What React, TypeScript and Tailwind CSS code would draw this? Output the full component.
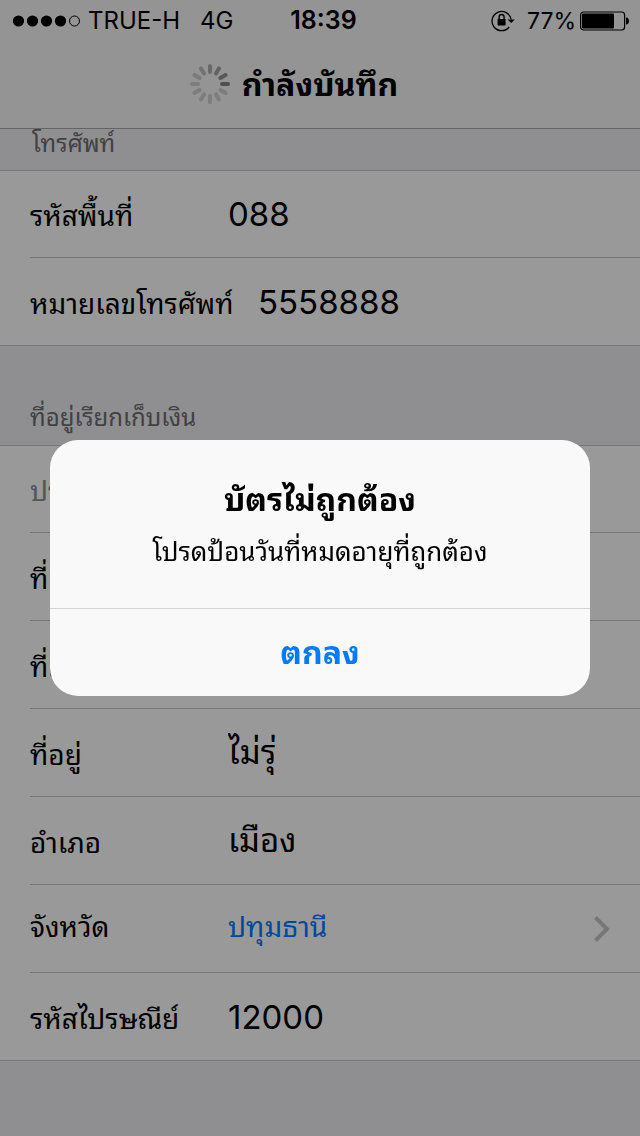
import React, { useState } from 'react';

const Spinner: React.FC = () => {
  const shades = [0.55, 0.65, 0.8, 0.9, 0.3, 0.3, 0.3, 0.3, 0.3, 0.3, 0.35, 0.45];
  return (
    <svg viewBox="0 0 40 40" className="h-10 w-10" aria-hidden="true">
      {shades.map((o, i) => (
        <rect key={i} x="18" y="0" width="4" height="10" rx="2" fill="#777" opacity={o} transform={`rotate(${i * 30} 20 20)`} />
      ))}
    </svg>
  );
};

const StatusBar: React.FC = () => (
  <div className="grid h-10 grid-cols-[1fr_auto_1fr] items-center pt-0.5 pr-[11px] pl-3 text-2xl">
    <div className="flex items-center whitespace-nowrap">
      <svg viewBox="0 0 70 12" className="mr-1.5 h-3 w-[70px]" aria-hidden="true">
        {[6, 20, 34, 48].map(x => <circle key={x} cx={x + 0.5} cy="6" r="5.6" />)}
        <circle cx="62.5" cy="6" r="5" fill="none" stroke="#000" />
      </svg>
      <span>TRUE-H</span>
      <span className="ml-5">4G</span>
    </div>
    <span className="pl-1.5 text-[25px] font-semibold">18:39</span>
    <div className="flex items-center justify-end">
      <svg viewBox="0 0 24 22" className="mr-3 h-[22px] w-6" aria-hidden="true">
        <path d="M18.2 17A9.6 9.6 0 1 1 20.1 9.5" fill="none" stroke="#000" strokeWidth="1.3" />
        <path d="M16.6 9.5h7.2l-3.6 3.6z" />
        <rect x="6.6" y="9" width="8" height="6.4" rx="0.6" />
        <path d="M8.1 9.5V7a2.5 2.5 0 0 1 5 0v2.5" fill="none" stroke="#000" strokeWidth="1.4" />
      </svg>
      <span className="text-[23px]">77%</span>
      <svg viewBox="0 0 49 20" className="ml-1 h-5 w-[49px]" aria-hidden="true">
        <rect x="0.6" y="1" width="44" height="18" rx="3" fill="none" stroke="#000" strokeWidth="1.2" />
        <rect x="2" y="2.5" width="32" height="15" rx="1" />
        <path d="M46 6.5c4 0 4 7 0 7z" />
      </svg>
    </div>
  </div>
);

type RowProps = {
  id: string;
  label: string;
  value: string;
  wide?: boolean;
  numeric?: boolean;
};

const rowClass = 'flex h-[88px] items-center border-b border-[#c8c7cc] first:h-[87px] last:h-[87px] last:border-b-0';
const inputClass = 'h-16 min-w-0 flex-1 bg-transparent text-[33px] outline-none';

const Row: React.FC<RowProps> = ({ id, label, value, wide, numeric }) => {
  const [text, setText] = useState(value);
  return (
    <div className={rowClass}>
      <label htmlFor={id} className={wide ? 'w-[228px] shrink-0 pt-1 whitespace-nowrap' : 'w-[198px] shrink-0 pt-1 whitespace-nowrap'}>{label}</label>
      <input
        id={id}
        value={text}
        inputMode={numeric ? 'numeric' : 'text'}
        onChange={e => setText(e.target.value)}
        className={numeric ? inputClass : `${inputClass} pb-1.5`}
      />
    </div>
  );
};

const Alert: React.FC<{ onClose: () => void }> = ({ onClose }) => (
  <div className="fixed inset-0 flex items-center justify-center bg-black/40 px-[50px]">
    <div role="alertdialog" aria-labelledby="alert-title" aria-describedby="alert-text" className="w-full max-w-[540px] overflow-hidden rounded-[28px] bg-[#f9f9f9] text-center">
      <div className="flex h-[168px] flex-col items-center pt-9">
        <h2 id="alert-title" className="text-[32px] leading-[48px] font-bold">บัตรไม่ถูกต้อง</h2>
        <p id="alert-text" className="mt-2 text-[26px] leading-10">โปรดป้อนวันที่หมดอายุที่ถูกต้อง</p>
      </div>
      <button onClick={onClose} className="h-[88px] w-full border-t border-[#d3d3d8] text-[32px] font-bold text-[#007aff]">ตกลง</button>
    </div>
  </div>
);

const App: React.FC = () => {
  const [open, setOpen] = useState(true);

  return (
    <div className="min-h-screen bg-[#efeff4] font-['Inter','Noto_Sans_Thai_Looped','Loma','Garuda','Waree','Noto_Sans_Thai','Noto_Sans',sans-serif] text-[28px] text-black">
      <header className="border-b border-[#a7a7aa] bg-[#f7f7f7]">
        <StatusBar />
        <div className="flex h-[88px] items-center justify-center gap-3 pr-14 pl-1">
          <Spinner />
          <h1 className="pt-0.5 text-[32px] font-bold">กำลังบันทึก</h1>
        </div>
      </header>

      <h2 className="h-[41px] pl-8 text-2xl leading-[30px] text-[#6d6d72]">โทรศัพท์</h2>
      <section className="border-y border-[#c8c7cc] bg-white pl-[30px]">
        <Row id="area" label="รหัสพื้นที่" value="088" numeric />
        <Row id="phone" label="หมายเลขโทรศัพท์" value="5558888" wide numeric />
      </section>

      <h2 className="h-[99px] pt-[52px] pl-[30px] text-2xl leading-10 text-[#6d6d72]">ที่อยู่เรียกเก็บเงิน</h2>
      <section className="border-y border-[#c8c7cc] bg-white pl-[30px]">
        <div className={`${rowClass} pt-1 text-[#8e8e93]`}>ประเทศ</div>
        <Row id="address1" label="ที่อยู่" value="" />
        <Row id="address2" label="ที่อยู่" value="" />
        <Row id="address3" label="ที่อยู่" value="ไม่รุ่" />
        <Row id="district" label="อำเภอ" value="เมือง" />
        <div className={`${rowClass} pr-[30px]`}>
          <label htmlFor="province" className="w-[198px] shrink-0 pb-1">จังหวัด</label>
          <button id="province" className="flex flex-1 items-center justify-between text-[#007aff]">
            <span className="pb-1">ปทุมธานี</span>
            <svg viewBox="0 0 16 26" className="h-[26px] w-4" fill="none" stroke="#c7c7cc" strokeWidth="4" aria-hidden="true">
              <path d="M1.5 1.5 13 13 1.5 24.5" />
            </svg>
          </button>
        </div>
        <Row id="zip" label="รหัสไปรษณีย์" value="12000" numeric />
      </section>

      {open && <Alert onClose={() => setOpen(false)} />}
    </div>
  );
};

export default App;
